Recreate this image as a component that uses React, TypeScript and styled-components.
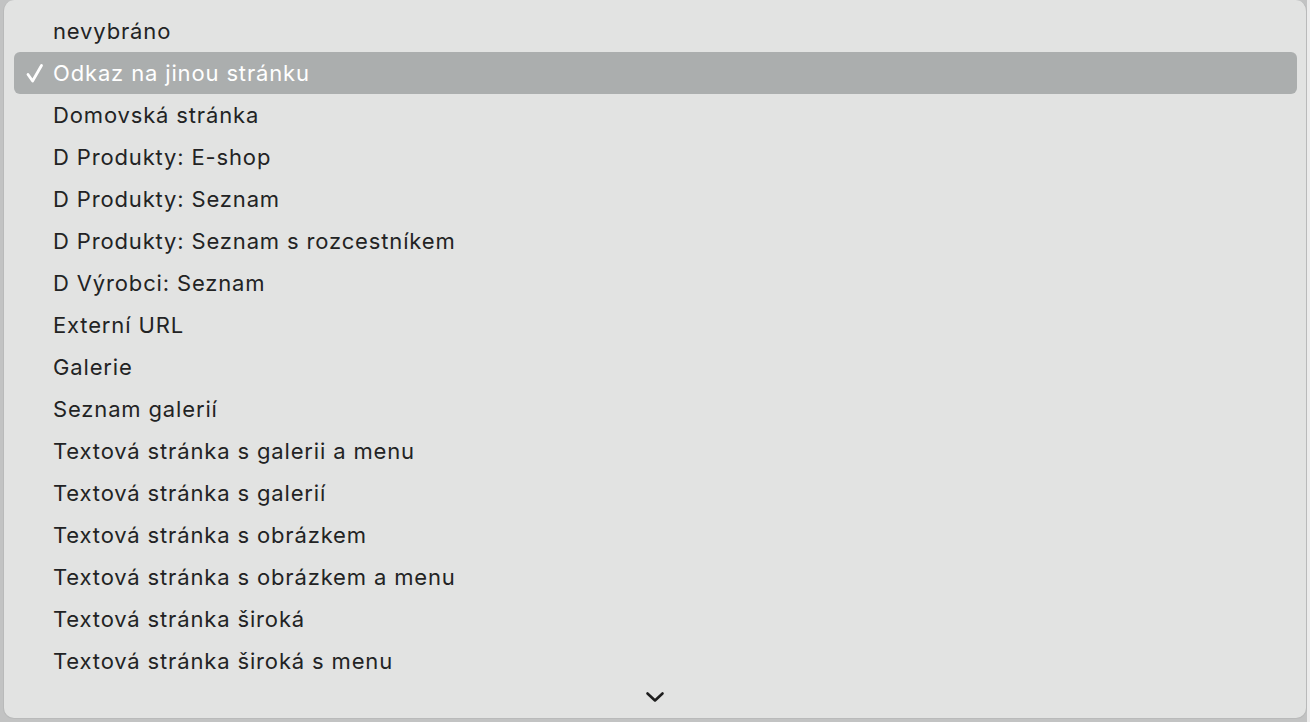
import React from 'react';
import styled, { createGlobalStyle } from 'styled-components';

const GlobalStyle = createGlobalStyle`
  html, body {
    margin: 0;
    padding: 0;
    width: 1310px;
    height: 722px;
    overflow: hidden;
    background: #c2c3c3;
  }
`;

const Screen = styled.div`
  display: flex;
  width: 1310px;
  height: 722px;
`;

const Gutter = styled.div`
  width: 3px;
  flex: none;
`;

const Backdrop = styled.div`
  flex: 1;
  background: #ececec;
`;

const Menu = styled.div`
  width: 1304px;
  height: 719px;
  flex: none;
  box-sizing: border-box;
  background: #e2e3e2;
  border: 1px solid #b9baba;
  border-top: none;
  border-radius: 11px;
  padding: 10px 9px 0 10px;
  display: flex;
  flex-direction: column;
  font-family: Inter, "Noto Sans", sans-serif;
  font-size: 22px;
  letter-spacing: 0.85px;
  color: #222324;
`;

const Item = styled.div<{ $active?: boolean }>`
  height: 42px;
  flex: none;
  display: flex;
  align-items: center;
  border-radius: 6px;
  background: ${(p) => (p.$active ? '#abaeae' : 'transparent')};
  color: ${(p) => (p.$active ? '#ffffff' : 'inherit')};
`;

const Mark = styled.span`
  width: 39px;
  flex: none;
  display: flex;
  justify-content: center;
  padding-left: 2px;
  box-sizing: border-box;
`;

const Label = styled.span`
  white-space: nowrap;
`;

const Scroller = styled.div`
  height: 30px;
  display: flex;
  align-items: center;
  justify-content: center;
  padding-right: 2px;
`;

const items = [
  'nevybráno',
  'Odkaz na jinou stránku',
  'Domovská stránka',
  'D Produkty: E-shop',
  'D Produkty: Seznam',
  'D Produkty: Seznam s rozcestníkem',
  'D Výrobci: Seznam',
  'Externí URL',
  'Galerie',
  'Seznam galerií',
  'Textová stránka s galerii a menu',
  'Textová stránka s galerií',
  'Textová stránka s obrázkem',
  'Textová stránka s obrázkem a menu',
  'Textová stránka široká',
  'Textová stránka široká s menu',
];

const Check = () => (
  <svg width="20" height="22" viewBox="0 0 20 22">
    <path d="M3 12.5 L7.6 19 L16.5 3.5" fill="none" stroke="#fff" strokeWidth="2.8" strokeLinecap="round" strokeLinejoin="round" />
  </svg>
);

const Chevron = () => (
  <svg width="20" height="12" viewBox="0 0 20 12">
    <path d="M2.5 2.5 L10 9.5 L17.5 2.5" fill="none" stroke="#1e1e1e" strokeWidth="2.6" strokeLinecap="round" strokeLinejoin="round" />
  </svg>
);

export default function App() {
  return (
    <>
      <GlobalStyle />
      <Screen>
        <Gutter />
        <Menu>
          {items.map((label, i) => (
            <Item key={label} $active={i === 1}>
              <Mark>{i === 1 && <Check />}</Mark>
              <Label>{label}</Label>
            </Item>
          ))}
          <Scroller>
            <Chevron />
          </Scroller>
        </Menu>
        <Backdrop />
      </Screen>
    </>
  );
}
